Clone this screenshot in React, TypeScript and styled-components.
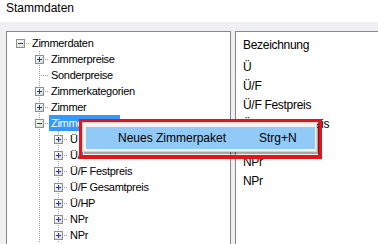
import React from "react";
import styled, { createGlobalStyle } from "styled-components";

const GlobalStyle = createGlobalStyle`
  html, body { margin: 0; padding: 0; background: #f0f0f0; overflow: hidden; }
  body { font-family: "Liberation Sans", Arial, sans-serif; color: #000; }
`;

const Window = styled.div`
  position: relative;
  width: 378px;
  height: 244px;
  overflow: hidden;
  display: flex;
  flex-direction: column;
  background: #f0f0f0;
`;

const Header = styled.div`
  flex: none;
  height: 22px;
  box-sizing: border-box;
  background: #fff;
  padding-left: 6px;
  font-size: 12px;
  line-height: 16px;
`;

const Content = styled.div`
  flex: 1;
  min-height: 0;
  display: flex;
  gap: 4px;
  padding: 9px 0 0 6px;
`;

const Panel = styled.div<{ $width: number }>`
  flex: 0 0 ${(p) => p.$width}px;
  height: 240px;
  box-sizing: border-box;
  background: #fff;
  border: 1px solid #828790;
`;

const Tree = styled.div`
  padding: 3px 0 0 4px;
  display: flex;
  flex-direction: column;
`;

const TreeRow = styled.div`
  display: flex;
  align-items: flex-start;
  height: 16px;
`;

const ConnectorSvg = styled.svg`
  display: block;
  flex: none;
`;

const TreeLabel = styled.span<{ $selected?: boolean }>`
  padding: 0 2px;
  font-size: 11px;
  letter-spacing: -0.3px;
  line-height: 16px;
  height: 16px;
  white-space: nowrap;
  background: ${(p) => (p.$selected ? "#3399ff" : "transparent")};
  color: ${(p) => (p.$selected ? "#fff" : "#000")};
`;

const List = styled.div`
  padding: 4px 0 0 7px;
  display: flex;
  flex-direction: column;
  font-size: 12px;
  letter-spacing: -0.3px;
`;

const ListHeader = styled.div`
  line-height: 19px;
  margin-bottom: 3px;
`;

const ListItem = styled.div`
  line-height: 19px;
  white-space: nowrap;
`;

const MenuFrame = styled.div`
  position: absolute;
  left: 79px;
  top: 119px;
  width: 236px;
  height: 33px;
  border-style: solid;
  border-color: #e3141c;
  border-width: 3px 4px 4px 3px;
`;

const Menu = styled.div`
  width: 235px;
  height: 30px;
  box-sizing: border-box;
  background: #f2f2f2;
  border: 1px solid #d4d4d4;
  padding: 4px 1px 2px 3px;
  box-shadow: 2px 2px 1px rgba(0, 0, 0, 0.35);
`;

const MenuItem = styled.div`
  display: flex;
  height: 22px;
  line-height: 22px;
  padding-left: 32px;
  background: #91c9f7;
  font-size: 12px;
  white-space: nowrap;
`;

const MenuLabel = styled.span`
  width: 141px;
`;

const DOT = "#a0a0a0";

type Expander = "plus" | "minus" | "none";

const Connector: React.FC<{ expander?: Expander; vertical?: boolean; elbow?: boolean }> = ({
  expander = "none",
  vertical = false,
  elbow = false,
}) => (
  <ConnectorSvg width="19" height="16" viewBox="0 0 19 16" shapeRendering="crispEdges">
    {vertical && (
      <line x1="9.5" y1="0" x2="9.5" y2="16" stroke={DOT} strokeWidth="1" strokeDasharray="1 1" />
    )}
    {elbow && expander === "none" && (
      <line x1="11" y1="8.5" x2="19" y2="8.5" stroke={DOT} strokeWidth="1" strokeDasharray="1 1" />
    )}
    {expander !== "none" && (
      <>
        <line x1="15" y1="8.5" x2="19" y2="8.5" stroke={DOT} strokeWidth="1" strokeDasharray="1 1" />
        <defs>
          <linearGradient id="boxfill" x1="0" y1="0" x2="1" y2="1">
            <stop offset="0" stopColor="#ffffff" />
            <stop offset="1" stopColor="#d6d6d6" />
          </linearGradient>
        </defs>
        <rect x="5.5" y="4.5" width="8" height="8" fill="url(#boxfill)" stroke="#8f8f8f" strokeWidth="1" />
        <line x1="7" y1="8.5" x2="12" y2="8.5" stroke="#24408a" strokeWidth="1" />
        {expander === "plus" && (
          <line x1="9.5" y1="6" x2="9.5" y2="11" stroke="#24408a" strokeWidth="1" />
        )}
      </>
    )}
  </ConnectorSvg>
);

interface TreeNode {
  label: string;
  level: number;
  expander: Expander;
  guides: boolean[];
  vertical: boolean;
  selected?: boolean;
}

const nodes: TreeNode[] = [
  { label: "Zimmerdaten", level: 0, expander: "minus", guides: [], vertical: false },
  { label: "Zimmerpreise", level: 1, expander: "plus", guides: [false], vertical: true },
  { label: "Sonderpreise", level: 1, expander: "none", guides: [false], vertical: true },
  { label: "Zimmerkategorien", level: 1, expander: "plus", guides: [false], vertical: true },
  { label: "Zimmer", level: 1, expander: "plus", guides: [false], vertical: true },
  { label: "Zimmerpakete", level: 1, expander: "minus", guides: [false], vertical: true, selected: true },
  { label: "Ü", level: 2, expander: "plus", guides: [false, true], vertical: true },
  { label: "Ü/F", level: 2, expander: "plus", guides: [false, true], vertical: true },
  { label: "Ü/F Festpreis", level: 2, expander: "plus", guides: [false, true], vertical: true },
  { label: "Ü/F Gesamtpreis", level: 2, expander: "plus", guides: [false, true], vertical: true },
  { label: "Ü/HP", level: 2, expander: "plus", guides: [false, true], vertical: true },
  { label: "NPr", level: 2, expander: "plus", guides: [false, true], vertical: true },
  { label: "NPr", level: 2, expander: "plus", guides: [false, true], vertical: true },
];

const listItems = ["Ü", "Ü/F", "Ü/F Festpreis", "Ü/F Gesamtpreis", "Ü/HP", "NPr", "NPr"];

export default function App() {
  return (
    <>
      <GlobalStyle />
      <Window>
        <Header>Stammdaten</Header>
        <Content>
          <Panel $width={225}>
            <Tree>
              {nodes.map((n, i) => (
                <TreeRow key={i}>
                  {n.guides.map((g, j) => (
                    <Connector key={j} vertical={g} />
                  ))}
                  <Connector expander={n.expander} vertical={n.vertical} elbow />
                  <TreeLabel $selected={n.selected}>{n.label}</TreeLabel>
                </TreeRow>
              ))}
            </Tree>
          </Panel>
          <Panel $width={200}>
            <List>
              <ListHeader>Bezeichnung</ListHeader>
              {listItems.map((t, i) => (
                <ListItem key={i}>{t}</ListItem>
              ))}
            </List>
          </Panel>
        </Content>
        <MenuFrame>
          <Menu>
            <MenuItem>
              <MenuLabel>Neues Zimmerpaket</MenuLabel>
              <span>Strg+N</span>
            </MenuItem>
          </Menu>
        </MenuFrame>
      </Window>
    </>
  );
}
